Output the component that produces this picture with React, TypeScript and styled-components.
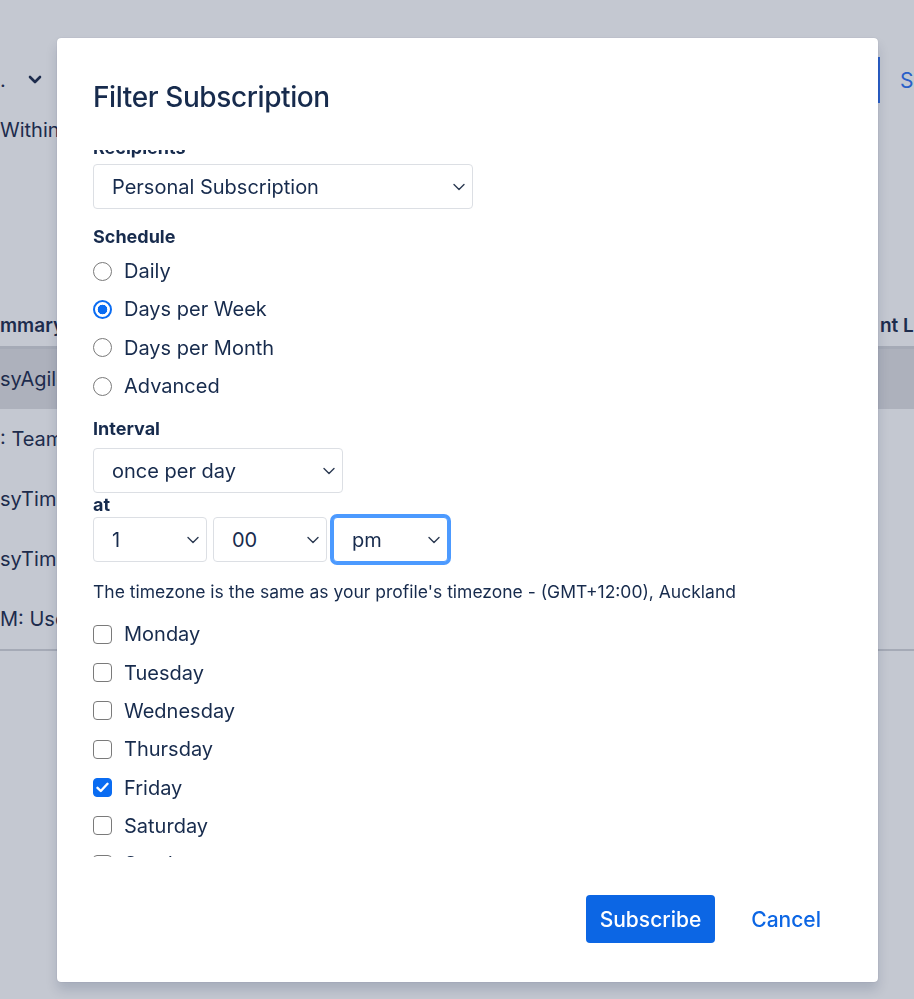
import React, { useLayoutEffect, useRef } from "react";
import styled, { createGlobalStyle, css } from "styled-components";

const Global = createGlobalStyle`
  html, body { margin: 0; padding: 0; }
  body {
    width: 914px;
    height: 999px;
    overflow: hidden;
    background: #c4c8d1;
    font-family: Inter, "Noto Sans", "Liberation Sans", sans-serif;
    color: #172b4d;
  }
  * { box-sizing: border-box; }
`;

/* ---------- background page (under the blanket) ---------- */
const Page = styled.div`
  width: 914px;
  height: 999px;
  overflow: hidden;
  display: flex;
  flex-direction: column;
  color: #1d2c4d;
  font-size: 20px;
`;

const TopBar = styled.div`
  margin-top: 57px;
  height: 46px;
  display: flex;
  align-items: center;
  justify-content: space-between;
`;

const TopLeft = styled.div`
  display: flex;
  align-items: center;
  gap: 22px;
  line-height: 1;
`;

const TopRight = styled.div`
  width: 36px;
  height: 46px;
  border-left: 2px solid #2a60c9;
  padding-left: 20px;
  display: flex;
  align-items: center;
  overflow: hidden;
  white-space: nowrap;
  color: #2a5fc8;
  font-size: 21px;
`;

const WithinLine = styled.div`
  margin-top: 15px;
  line-height: 24px;
  white-space: nowrap;
`;

const TableHead = styled.div`
  margin-top: 162px;
  height: 45px;
  display: flex;
  align-items: center;
  justify-content: space-between;
  border-bottom: 3px solid #a5aab6;
  font-weight: 600;
  font-size: 19px;
`;

const HeadCell = styled.div<{ $w?: number }>`
  white-space: nowrap;
  overflow: hidden;
  ${(p) => p.$w && css`width: ${p.$w}px;`}
`;

const Row = styled.div<{ $hl?: boolean }>`
  height: 60px;
  display: flex;
  align-items: center;
  white-space: nowrap;
  background: ${(p) => (p.$hl ? "#adb1bc" : "transparent")};
`;

const TableEnd = styled.div`
  border-top: 2px solid #a5aab6;
`;

/* ---------- modal ---------- */
const Modal = styled.div`
  position: fixed;
  left: 57px;
  top: 38px;
  width: 821px;
  height: 944px;
  background: #ffffff;
  border-radius: 4px;
  box-shadow: 0 0 1px rgba(9, 30, 66, 0.31), 0 8px 12px rgba(9, 30, 66, 0.15);
  display: flex;
  flex-direction: column;
  color: #172b4d;
`;

const Header = styled.div`
  padding: 41px 36px 35px;
`;

const Title = styled.h1`
  margin: 0;
  font-size: 28px;
  line-height: 36px;
  font-weight: 500;
  letter-spacing: -0.4px;
`;

const Body = styled.div`
  flex: 1;
  overflow: hidden;
  padding: 0 36px;
`;

const Label = styled.div<{ $mt?: number }>`
  font-size: 18px;
  font-weight: 700;
  line-height: 24px;
  margin-top: ${(p) => p.$mt ?? 0}px;
`;

const SelectBox = styled.div<{ $w: number; $focus?: boolean; $mt?: number }>`
  width: ${(p) => p.$w}px;
  height: 45px;
  margin-top: ${(p) => p.$mt ?? 0}px;
  border: 1px solid #dcdfe4;
  border-radius: 4px;
  background: #fff;
  display: flex;
  align-items: center;
  justify-content: space-between;
  padding: 0 7px 0 18px;
  font-size: 20px;
  ${(p) =>
    p.$focus &&
    css`
      border-color: #4c9aff;
      box-shadow: 0 0 0 3px #4c9aff;
    `}
`;

const TimeRow = styled.div`
  display: flex;
  gap: 6px;
`;

const Chevron = () => (
  <svg width="12" height="8" viewBox="0 0 12 8" fill="none">
    <path d="M1 1.5 L6 6.5 L11 1.5" stroke="#2c3a52" strokeWidth="1.4" strokeLinecap="round" strokeLinejoin="round" />
  </svg>
);

const Select = ({ w, value, focus, mt }: { w: number; value: string; focus?: boolean; mt?: number }) => (
  <SelectBox $w={w} $focus={focus} $mt={mt}>
    <span>{value}</span>
    <Chevron />
  </SelectBox>
);

const OptionList = styled.div<{ $mt?: number }>`
  display: flex;
  flex-direction: column;
  margin-top: ${(p) => p.$mt ?? 0}px;
`;

const OptionRow = styled.label`
  height: 38.3px;
  display: flex;
  align-items: center;
  gap: 12px;
  font-size: 20px;
  flex-shrink: 0;
`;

const RadioMark = styled.span<{ $on?: boolean }>`
  width: 19px;
  height: 19px;
  border-radius: 50%;
  flex-shrink: 0;
  border: 1px solid #7a7a7a;
  background: #fff;
  ${(p) =>
    p.$on &&
    css`
      border: 2px solid #0a6cf2;
      background: radial-gradient(circle, #0a6cf2 0 4.6px, #ffffff 5.1px);
    `}
`;

const CheckMark = styled.span<{ $on?: boolean }>`
  width: 19px;
  height: 19px;
  border-radius: 4px;
  flex-shrink: 0;
  border: 1px solid #7a7a7a;
  background: #fff;
  display: flex;
  align-items: center;
  justify-content: center;
  ${(p) =>
    p.$on &&
    css`
      border-color: #0a6cf2;
      background: #0a6cf2;
    `}
`;

const Hint = styled.div`
  margin-top: 18px;
  font-size: 17.5px;
  line-height: 24px;
  white-space: nowrap;
`;

const Footer = styled.div`
  height: 125px;
  flex-shrink: 0;
  display: flex;
  align-items: center;
  justify-content: flex-end;
  gap: 22px;
  padding: 0 43px 1px 0;
`;

const Button = styled.button<{ $primary?: boolean }>`
  height: 48px;
  padding: 0 14px;
  border: none;
  border-radius: 4px;
  font-family: inherit;
  font-size: 21px;
  font-weight: 500;
  cursor: pointer;
  background: ${(p) => (p.$primary ? "#0c66e4" : "transparent")};
  color: ${(p) => (p.$primary ? "#ffffff" : "#0c66e4")};
`;

const Tick = () => (
  <svg width="13" height="11" viewBox="0 0 13 11" fill="none">
    <path d="M1.5 5.8 L4.8 9 L11.5 1.8" stroke="#fff" strokeWidth="2.4" strokeLinecap="round" strokeLinejoin="round" />
  </svg>
);

const schedules = ["Daily", "Days per Week", "Days per Month", "Advanced"];
const days = ["Monday", "Tuesday", "Wednesday", "Thursday", "Friday", "Saturday", "Sunday"];

export default function App() {
  const bodyRef = useRef<HTMLDivElement>(null);
  useLayoutEffect(() => {
    if (bodyRef.current) bodyRef.current.scrollTop = 14;
  }, []);

  return (
    <>
      <Global />
      <Page>
        <TopBar>
          <TopLeft>
            <span>.</span>
            <svg width="14" height="10" viewBox="0 0 14 10">
              <path d="M2 2 L7 7 L12 2" stroke="#1d2c4d" strokeWidth="2.6" fill="none" strokeLinecap="round" strokeLinejoin="round" />
            </svg>
          </TopLeft>
          <TopRight>Save as</TopRight>
        </TopBar>
        <WithinLine>Within</WithinLine>
        <TableHead>
          <HeadCell>mmary</HeadCell>
          <HeadCell $w={34}>nt Links</HeadCell>
        </TableHead>
        <Row $hl>syAgile</Row>
        <Row>: Team</Row>
        <Row>syTime</Row>
        <Row>syTime</Row>
        <Row>M: User</Row>
        <TableEnd />
      </Page>

      <Modal role="dialog" aria-label="Filter Subscription">
        <Header>
          <Title>Filter Subscription</Title>
        </Header>
        <Body ref={bodyRef}>
          <Label>Recipients</Label>
          <Select w={380} value="Personal Subscription" mt={4} />

          <Label $mt={16}>Schedule</Label>
          <OptionList $mt={3}>
            {schedules.map((s) => (
              <OptionRow key={s}>
                <RadioMark $on={s === "Days per Week"} />
                {s}
              </OptionRow>
            ))}
          </OptionList>

          <Label $mt={12}>Interval</Label>
          <Select w={250} value="once per day" mt={7} />
          <Label>at</Label>
          <TimeRow>
            <Select w={114} value="1" />
            <Select w={114} value="00" />
            <Select w={115} value="pm" focus />
          </TimeRow>

          <Hint>The timezone is the same as your profile's timezone - (GMT+12:00), Auckland</Hint>

          <OptionList $mt={11}>
            {days.map((d) => (
              <OptionRow key={d}>
                <CheckMark $on={d === "Friday"}>{d === "Friday" && <Tick />}</CheckMark>
                {d}
              </OptionRow>
            ))}
          </OptionList>
        </Body>
        <Footer>
          <Button $primary>Subscribe</Button>
          <Button>Cancel</Button>
        </Footer>
      </Modal>
    </>
  );
}
